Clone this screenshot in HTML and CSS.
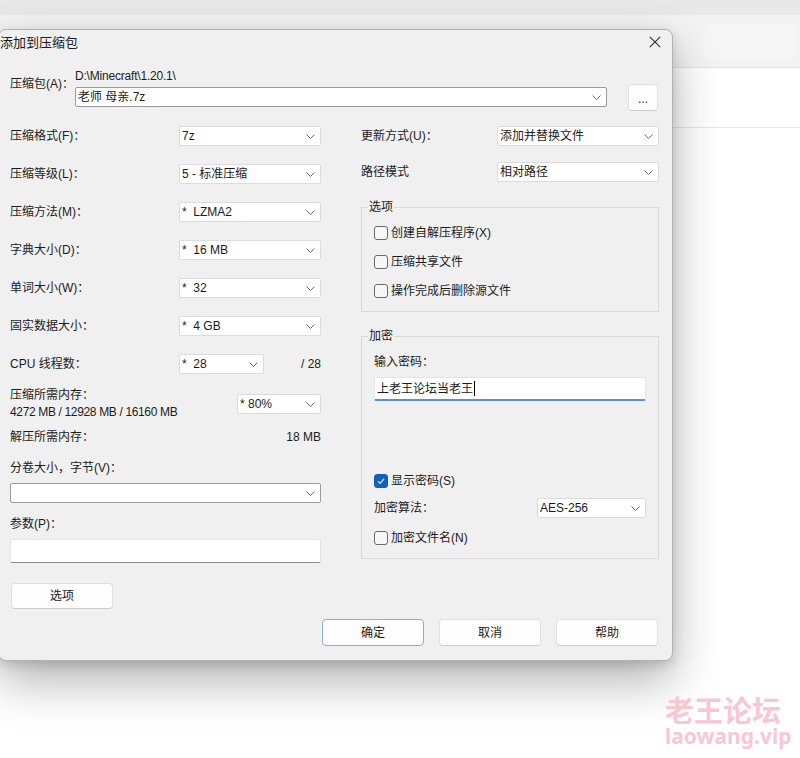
FILE: index.html
```html
<!DOCTYPE html>
<html lang="zh-CN">
<head>
<meta charset="utf-8">
<title>添加到压缩包</title>
<link rel="stylesheet" href="styles.css">
</head>
<body>
<div class="strip"></div>
<div class="toolbar"><div class="search"></div></div>
<div class="content-head"></div>

<div class="dialog">
  <div class="titlebar">
    <span class="title">添加到压缩包</span>
    <svg class="close" viewBox="0 0 12 12"><path d="M0.8 0.8L11.2 11.2M11.2 0.8L0.8 11.2"/></svg>
  </div>
  <div class="body">
    <div class="archive">
      <span class="archive-lbl">压缩包(A)：</span>
      <div class="archive-main">
        <div class="path">D:\Minecraft\1.20.1\</div>
        <div class="combo edit path-combo"><span>老师 母亲.7z</span><svg class="chev" viewBox="0 0 9 5"><path d="M0.5 0.5L4.5 4.5L8.5 0.5"/></svg></div>
      </div>
      <button class="btn browse">...</button>
    </div>

    <div class="columns">
      <div class="lcol">
        <div class="row"><span class="lbl-l">压缩格式(F)：</span><div class="combo w142"><span>7z</span><svg class="chev" viewBox="0 0 9 5"><path d="M0.5 0.5L4.5 4.5L8.5 0.5"/></svg></div></div>
        <div class="row"><span class="lbl-l">压缩等级(L)：</span><div class="combo w142"><span>5 - 标准压缩</span><svg class="chev" viewBox="0 0 9 5"><path d="M0.5 0.5L4.5 4.5L8.5 0.5"/></svg></div></div>
        <div class="row"><span class="lbl-l">压缩方法(M)：</span><div class="combo w142"><span>*&nbsp;&nbsp;LZMA2</span><svg class="chev" viewBox="0 0 9 5"><path d="M0.5 0.5L4.5 4.5L8.5 0.5"/></svg></div></div>
        <div class="row"><span class="lbl-l">字典大小(D)：</span><div class="combo w142"><span>*&nbsp;&nbsp;16 MB</span><svg class="chev" viewBox="0 0 9 5"><path d="M0.5 0.5L4.5 4.5L8.5 0.5"/></svg></div></div>
        <div class="row"><span class="lbl-l">单词大小(W)：</span><div class="combo w142"><span>*&nbsp;&nbsp;32</span><svg class="chev" viewBox="0 0 9 5"><path d="M0.5 0.5L4.5 4.5L8.5 0.5"/></svg></div></div>
        <div class="row"><span class="lbl-l">固实数据大小：</span><div class="combo w142"><span>*&nbsp;&nbsp;4 GB</span><svg class="chev" viewBox="0 0 9 5"><path d="M0.5 0.5L4.5 4.5L8.5 0.5"/></svg></div></div>
        <div class="row"><span class="lbl-l">CPU 线程数：</span><div class="combo w85"><span>*&nbsp;&nbsp;28</span><svg class="chev" viewBox="0 0 9 5"><path d="M0.5 0.5L4.5 4.5L8.5 0.5"/></svg></div><span class="tail">/ 28</span></div>
        <div class="mem">
          <div class="mem-text"><div>压缩所需内存：</div><div class="mem-nums">4272 MB / 12928 MB / 16160 MB</div></div>
          <div class="combo w84"><span>* 80%</span><svg class="chev" viewBox="0 0 9 5"><path d="M0.5 0.5L4.5 4.5L8.5 0.5"/></svg></div>
        </div>
        <div class="textrow decomp"><span>解压所需内存：</span><span>18 MB</span></div>
        <div class="textrow vol-lbl"><span>分卷大小，字节(V)：</span></div>
        <div class="combo edit full vol-combo"><span></span><svg class="chev" viewBox="0 0 9 5"><path d="M0.5 0.5L4.5 4.5L8.5 0.5"/></svg></div>
        <div class="textrow param-lbl"><span>参数(P)：</span></div>
        <div class="textbox param"></div>
        <button class="btn opts">选项</button>
      </div>

      <div class="rcol">
        <div class="row"><span class="lbl-r">更新方式(U)：</span><div class="combo w162"><span>添加并替换文件</span><svg class="chev" viewBox="0 0 9 5"><path d="M0.5 0.5L4.5 4.5L8.5 0.5"/></svg></div></div>
        <div class="row"><span class="lbl-r">路径模式</span><div class="combo w162"><span>相对路径</span><svg class="chev" viewBox="0 0 9 5"><path d="M0.5 0.5L4.5 4.5L8.5 0.5"/></svg></div></div>

        <fieldset class="group options">
          <legend>选项</legend>
          <label class="check"><span class="box"></span><span>创建自解压程序(X)</span></label>
          <label class="check"><span class="box"></span><span>压缩共享文件</span></label>
          <label class="check"><span class="box"></span><span>操作完成后删除源文件</span></label>
        </fieldset>

        <fieldset class="group crypt">
          <legend>加密</legend>
          <div class="textrow">输入密码：</div>
          <div class="textbox pw"><span>上老王论坛当老王</span><span class="caret"></span></div>
          <label class="check show"><span class="box on"><svg viewBox="0 0 14 14"><path d="M3.5 7.3L6 9.6L10.6 4.6"/></svg></span><span>显示密码(S)</span></label>
          <div class="row algo"><span>加密算法：</span><div class="combo w109"><span>AES-256</span><svg class="chev" viewBox="0 0 9 5"><path d="M0.5 0.5L4.5 4.5L8.5 0.5"/></svg></div></div>
          <label class="check names"><span class="box"></span><span>加密文件名(N)</span></label>
        </fieldset>
      </div>
    </div>

    <div class="actions">
      <button class="btn primary">确定</button>
      <button class="btn">取消</button>
      <button class="btn">帮助</button>
    </div>
  </div>
</div>

<div class="watermark">
  <div class="wm-cn">老王论坛</div>
  <div class="wm-en">laowang.vip</div>
</div>
</body>
</html>
```

FILE: styles.css
```css
* { box-sizing: border-box; }
html, body { margin: 0; padding: 0; }
body {
  width: 800px;
  height: 758px;
  overflow: hidden;
  position: relative;
  background: #ffffff;
  font-family: "Liberation Sans", "Noto Sans CJK SC", sans-serif;
  font-size: 12px;
  line-height: 16px;
  color: #1b1b1b;
}

/* background window */
.strip { height: 15px; background: #e8e8e8; }
.toolbar {
  height: 53px;
  background: #f3f3f3;
  border-bottom: 1px solid #e2e2e2;
  display: flex;
  justify-content: flex-end;
  padding: 9px 5px 0 0;
}
.search { width: 92px; height: 36px; background: #f6f6f6; border-radius: 6px; }
.content-head { height: 60px; border-bottom: 1px solid #e6e6e6; }

/* dialog window */
.dialog {
  position: absolute;
  left: -2px;
  top: 29px;
  width: 675px;
  height: 632px;
  background: #f0f0f0;
  border: 1px solid #b2b2b2;
  border-radius: 8px;
  box-shadow: 0 20px 48px rgba(0, 0, 0, 0.30), 0 4px 12px rgba(0, 0, 0, 0.14);
  display: flex;
  flex-direction: column;
}
.titlebar {
  height: 26px;
  flex: none;
  display: flex;
  align-items: center;
  justify-content: space-between;
  padding: 0 11px 2px 1px;
}
.title { font-family: "Noto Sans CJK SC", sans-serif; font-size: 13px; line-height: 16px; color: #1a1a1a; }
.close { width: 12px; height: 12px; fill: none; stroke: #2b2b2b; stroke-width: 1.1; }

.body { padding: 12px 13px 0 11px; }

.archive { display: flex; align-items: flex-start; }
.archive-lbl { width: 65px; margin-top: 8px; }
.archive-main { width: 532px; }
.path { letter-spacing: -0.2px; }
.path-combo { margin-top: 3px; }
.browse { margin-left: 21px; margin-top: 16px; width: 30px !important; height: 27px !important; color: #777; font-size: 11px; padding-top: 3px !important; }

/* combo boxes */
.combo {
  height: 20px;
  background: #ffffff;
  border: 1px solid #dcdcdc;
  border-radius: 2px;
  display: flex;
  align-items: center;
  justify-content: space-between;
  padding: 0 5px 0 2px;
  white-space: nowrap;
  flex: none;
}
.combo.edit { border-color: #9c9c9c; }
.chev { width: 9px; height: 5px; fill: none; stroke: #6a6a6a; stroke-width: 1; flex: none; }
.w142 { width: 142px; }
.w85 { width: 85px; }
.w84 { width: 84px; }
.w162 { width: 162px; }
.w109 { width: 109px; margin-left: auto; }
.full { width: 100%; }

.textbox {
  background: #ffffff;
  border: 1px solid #e4e4e4;
  border-bottom: 1px solid #8c8c8c;
  border-radius: 2px;
}

/* columns */
.columns { display: flex; gap: 40px; margin-top: 15px; align-items: flex-start; }
.lcol { width: 311px; flex: none; display: flex; flex-direction: column; }
.rcol { width: 298px; flex: none; display: flex; flex-direction: column; }

.row { display: flex; align-items: center; height: 20px; white-space: nowrap; }
.lcol > .row + .row { margin-top: 18px; }
.rcol > .row + .row { margin-top: 16px; }
.lbl-l { width: 169px; flex: none; }
.lbl-r { width: 136px; flex: none; }
.tail { margin-left: auto; }

.mem { margin-top: 13px; display: flex; align-items: center; justify-content: space-between; }
.mem-text { line-height: 17px; }
.mem-nums { letter-spacing: -0.35px; }

.textrow { height: 16px; display: flex; justify-content: space-between; white-space: nowrap; }
.decomp { margin-top: 8px; }
.vol-lbl { margin-top: 15px; }
.vol-combo { margin-top: 7px; }
.param-lbl { margin-top: 13px; }
.param { margin-top: 7px; height: 24px; }

/* buttons */
.btn {
  width: 102px;
  height: 27px;
  background: #fdfdfd;
  border: 1px solid #e0e0e0;
  border-bottom-color: #cccccc;
  border-radius: 4px;
  font: inherit;
  color: #1b1b1b;
  padding: 0;
}
.btn.primary { border-color: #86aedb; }
.opts { margin-top: 20px; margin-left: 1px; height: 26px; }

.actions { display: flex; justify-content: flex-end; gap: 15px; margin-top: 10px; padding-right: 1px; }

/* group boxes */
.group {
  margin: 17px 0 0 0;
  min-inline-size: 0;
  border: 1px solid #dadada;
  padding: 8px 12px 10px 12px;
}
.group legend { padding: 0 1px; margin-left: -6px; line-height: 16px; }
.crypt { margin-top: 16px; padding-top: 10px; }

.check { display: flex; align-items: center; gap: 3px; height: 20px; white-space: nowrap; }
.options .check + .check { margin-top: 9px; }
.box {
  width: 14px;
  height: 14px;
  border: 1px solid #6a6a6a;
  border-radius: 3px;
  background: #f7f7f7;
  flex: none;
  display: flex;
}
.box.on { background: #0f62b8; border-color: #0f62b8; }
.box.on svg { width: 12px; height: 12px; fill: none; stroke: #ffffff; stroke-width: 1.2; }

.pw { margin-top: 7px; height: 24px; border-bottom: 2px solid #5f8fca; display: flex; align-items: center; padding-left: 2px; }
.caret { width: 1px; height: 15px; background: #000; margin-left: 1px; }
.show { margin-top: 70px; }
.algo { margin-top: 7px; }
.names { margin-top: 10px; }

/* watermark overlay */
.watermark {
  position: absolute;
  left: 665px;
  top: 695px;
  display: flex;
  flex-direction: column;
  gap: 2px;
  color: #f7c8d2;
  font-weight: bold;
}
.wm-cn { font-family: "Noto Sans CJK SC", sans-serif; font-size: 29px; line-height: 29px; }
.wm-en { font-family: "Noto Sans", sans-serif; font-size: 21px; line-height: 20px; }
```
